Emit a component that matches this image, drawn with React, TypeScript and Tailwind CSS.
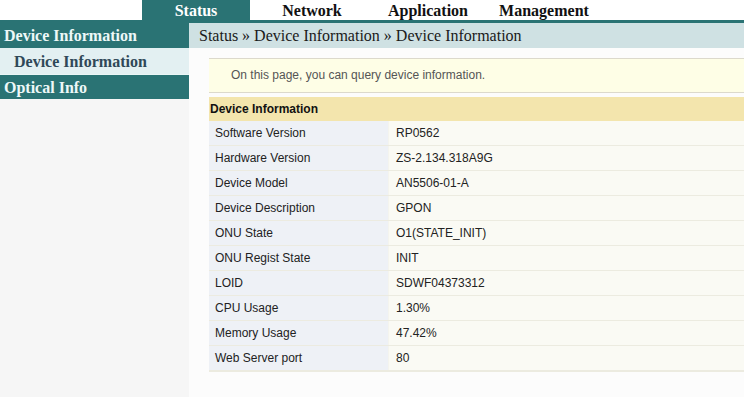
const tabs = ['Status', 'Network', 'Application', 'Management']

const rows: [string, string][] = [
  ['Software Version', 'RP0562'],
  ['Hardware Version', 'ZS-2.134.318A9G'],
  ['Device Model', 'AN5506-01-A'],
  ['Device Description', 'GPON'],
  ['ONU State', 'O1(STATE_INIT)'],
  ['ONU Regist State', 'INIT'],
  ['LOID', 'SDWF04373312'],
  ['CPU Usage', '1.30%'],
  ['Memory Usage', '47.42%'],
  ['Web Server port', '80'],
]

export default function App() {
  return (
    <div className="w-[744px] h-[397px] overflow-hidden bg-[#fcfcfc] flex flex-col">
      {/* Top Nav */}
      <div className="h-[20px] bg-white flex pl-[142px] gap-[8px] font-['Liberation_Serif',serif] font-bold text-[16px] leading-[21px]">
        {tabs.map((t, i) => (
          <div
            key={t}
            className={
              i === 0
                ? 'w-[108px] text-center bg-[#2a7374] text-white'
                : 'w-[108px] text-center text-[#111]'
            }
          >
            {t}
          </div>
        ))}
      </div>
      <div className="h-[3px] bg-[#2a7374]" />

      <div className="flex flex-1">
        {/* Sidebar */}
        <div className="w-[189px] bg-[#f6f6f6] font-['Liberation_Serif',serif] font-bold text-[16px]">
          <div className="h-[25px] leading-[26px] bg-[#2a7374] text-[#eef8f8] pl-[4px]">Device Information</div>
          <div className="h-[26px] leading-[27px] bg-[#e3f0f2] text-[#2f4858] pl-[14px]">
            Device Information
          </div>
          <div className="h-[25px] leading-[26px] bg-[#2a7374] text-[#eef8f8] pl-[4px] border-t border-[#eaf6f6]">
            Optical Info
          </div>
        </div>

        {/* Main */}
        <div className="flex-1 flex flex-col">
          <div className="h-[25px] leading-[26px] bg-[#cfe1e3] pl-[10px] font-['Liberation_Serif',serif] text-[16px] text-[#1a1a1a]">
            Status » Device Information » Device Information
          </div>
          <div className="pl-[20px] pt-[10px] font-['Liberation_Sans',sans-serif] text-[12px]">
            <div className="h-[35px] leading-[33px] bg-[#fefee6] border-y border-[#dcd9cc] pl-[22px] text-[#555]">
              On this page, you can query device information.
            </div>
            <div className="mt-[4px] border-b border-[#ecebe0]">
              <div className="h-[24px] leading-[24px] bg-[#f3e5ad] pl-[1px] font-bold text-[#111]">Device Information</div>
              {rows.map(([k, v]) => (
                <div key={k} className="flex h-[25px] leading-[24px] border-b border-[#ecebe0] text-[#222]">
                  <div className="w-[180px] bg-[#eef1f6] pl-[6px] border-r border-[#f4f4ee]">{k}</div>
                  <div className="flex-1 bg-[#fafaf4] pl-[7px]">{v}</div>
                </div>
              ))}
            </div>
          </div>
        </div>
      </div>
    </div>
  )
}
